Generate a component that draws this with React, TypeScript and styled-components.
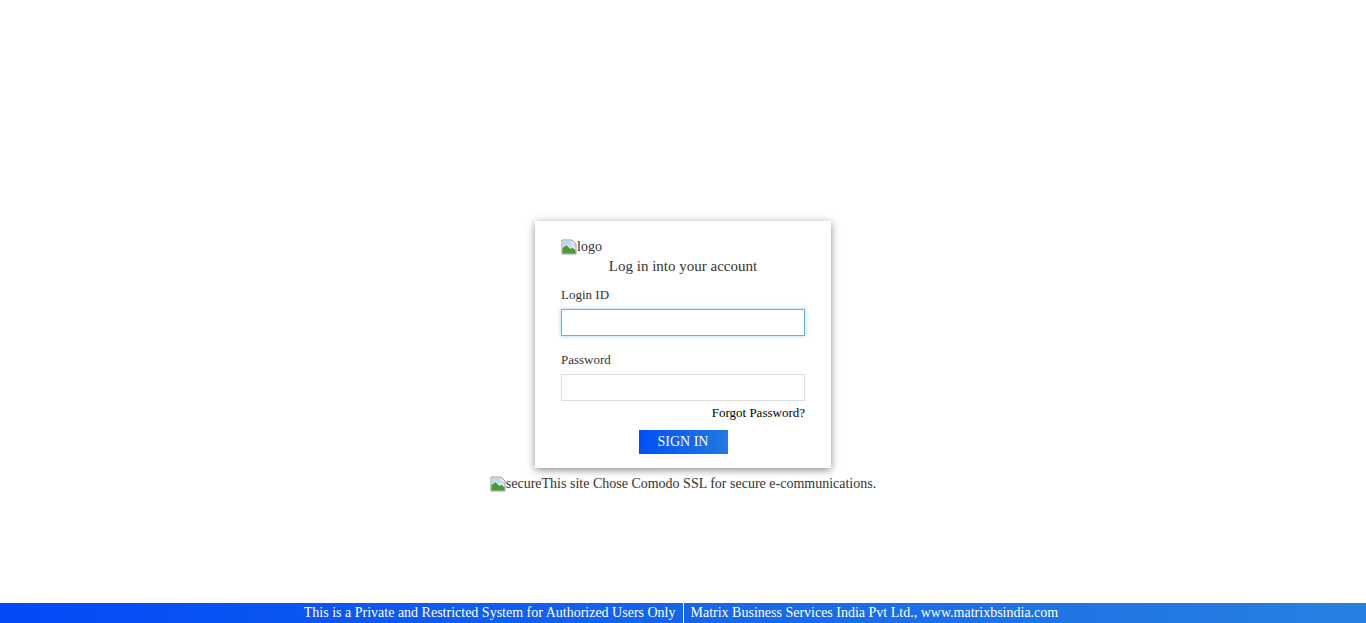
import React from 'react'
import styled, { createGlobalStyle } from 'styled-components'

const GlobalStyle = createGlobalStyle`
  html, body {
    margin: 0;
    padding: 0;
    background: #fff;
    font-family: "Liberation Serif", "Times New Roman", serif;
  }
`

const Page = styled.div`
  min-height: 100vh;
  display: flex;
  flex-direction: column;
`

const Main = styled.main`
  flex: 1;
  display: flex;
  flex-direction: column;
  align-items: center;
  padding-top: 221px;
`

const Card = styled.div`
  width: 296px;
  box-sizing: border-box;
  padding: 17px 26px 14px;
  background: #fff;
  box-shadow: 0 2px 8px rgba(0, 0, 0, 0.45);
  color: #333;
`

const Broken = styled.div`
  display: flex;
  align-items: center;
  height: 18px;
  font-size: 14px;
  line-height: 18px;
  color: #333;
`

const Title = styled.div`
  text-align: center;
  font-size: 15px;
  line-height: 20px;
  margin-bottom: 11px;
`

const Label = styled.label`
  display: block;
  font-size: 13px;
  line-height: 16px;
  margin-bottom: 6px;
`

const Input = styled.input<{ focused?: boolean }>`
  display: block;
  width: 100%;
  height: 27px;
  box-sizing: border-box;
  border: 1px solid ${({ focused }) => (focused ? '#66afe9' : '#ddd')};
  box-shadow: ${({ focused }) => (focused ? '0 0 4px rgba(102, 175, 233, 0.6)' : 'none')};
  outline: none;
  padding: 0 6px;
  font-size: 14px;
  margin-bottom: 16px;
`

const Forgot = styled.a`
  display: block;
  text-align: right;
  font-size: 13px;
  line-height: 16px;
  color: #000;
  text-decoration: none;
  margin-top: -12px;
`

const ButtonRow = styled.div`
  display: flex;
  justify-content: center;
  margin-top: 9px;
`

const SignIn = styled.button`
  width: 89px;
  height: 24px;
  border: none;
  background: linear-gradient(to right, #0050f5, #2279e0);
  color: #fff;
  font-family: "Liberation Serif", "Times New Roman", serif;
  font-size: 14px;
  padding: 0;
  cursor: pointer;
`

const Secure = styled.div`
  margin-top: 7px;
  font-size: 14px;
  line-height: 18px;
  color: #333;
  display: flex;
  align-items: center;
`

const Footer = styled.footer`
  height: 20px;
  display: flex;
  justify-content: center;
  align-items: center;
  padding-right: 4px;
  background: linear-gradient(to right, #0349f6, #2781e0);
  color: #fff;
  font-size: 14px;
`

const FooterItem = styled.span<{ divider?: boolean }>`
  padding: 0 7px;
  line-height: 20px;
  border-left: ${({ divider }) => (divider ? '1px solid #fff' : 'none')};
`

const BrokenIcon = () => (
  <svg width="16" height="16" viewBox="0 0 16 16">
    <path d="M1 1h10l4 4v10H1z" fill="#e8eef5" stroke="#999" strokeWidth="1" />
    <path d="M1.5 9l4-3 4 4 2-1.5 3 3V14.5h-13z" fill="#4a9a3c" />
    <path d="M1.5 1.5h9v4h4v3l-3-2-2 1.5-4-3-4 3z" fill="#bcd8f0" />
  </svg>
)

const App: React.FC = () => {
  return (
    <Page>
      <GlobalStyle />
      <Main>
        <Card>
          <Broken>
            <BrokenIcon />
            logo
          </Broken>
          <Title>Log in into your account</Title>
          <Label>Login ID</Label>
          <Input focused type="text" />
          <Label>Password</Label>
          <Input type="password" />
          <Forgot href="#">Forgot Password?</Forgot>
          <ButtonRow>
            <SignIn>SIGN IN</SignIn>
          </ButtonRow>
        </Card>
        <Secure>
          <BrokenIcon />
          secureThis site Chose Comodo SSL for secure e-communications.
        </Secure>
      </Main>
      <Footer>
        <FooterItem>This is a Private and Restricted System for Authorized Users Only</FooterItem>
        <FooterItem divider>Matrix Business Services India Pvt Ltd., www.matrixbsindia.com</FooterItem>
      </Footer>
    </Page>
  )
}

export default App
